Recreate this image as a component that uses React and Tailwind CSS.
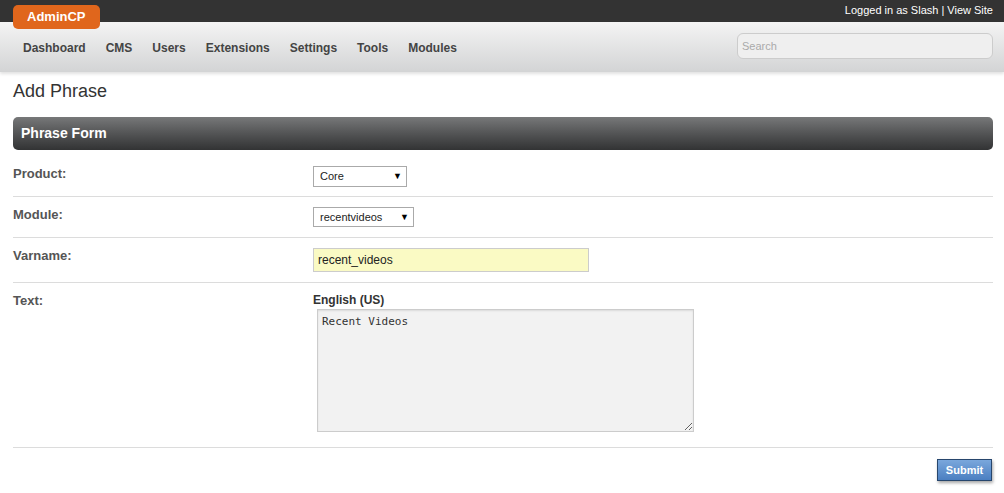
import { useState } from 'react';

const navItems = ['Dashboard', 'CMS', 'Users', 'Extensions', 'Settings', 'Tools', 'Modules'];

const Row = ({ label, children, className = '' }) => (
  <div className={`flex border-b border-[#dcdcdc] ${className}`}>
    <div className="w-[300px] text-[13px] font-bold text-[#555]">{label}</div>
    <div className="flex-1">{children}</div>
  </div>
);

export default function App() {
  const [product, setProduct] = useState('core');
  const [module, setModule] = useState('recentvideos');
  const [varname, setVarname] = useState('recent_videos');
  const [text, setText] = useState('Recent Videos');

  return (
    <div className="min-h-[493px] bg-white font-['Liberation_Sans',Arial,sans-serif] text-[#333]">
      {/* top strip */}
      <div className="flex h-[22px] items-start justify-between bg-[#333] pl-[13px] pr-[11px]">
        <div className="mt-[5px] rounded-[5px] bg-[#e0661c] px-[14px] pt-[3px] pb-[4px] text-[13px] font-bold leading-[17px] text-white">
          AdminCP
        </div>
        <div className="pt-[3px] text-[11px] leading-[14px] text-white">
          Logged in as Slash | View Site
        </div>
      </div>

      {/* nav */}
      <div className="flex h-[50px] items-center justify-between bg-gradient-to-b from-[#f4f4f4] to-[#d3d4d5] pl-[13px] pr-[11px] shadow-[0_2px_3px_rgba(0,0,0,0.12)]">
        <div className="flex gap-[20px] pl-[10px] pt-[1px]">
          {navItems.map(n => (
            <span key={n} className="text-[12px] font-bold text-[#444]">{n}</span>
          ))}
        </div>
        <input
          placeholder="Search"
          className="mt-[-2px] h-[26px] w-[256px] rounded-[6px] border border-[#ccc] bg-[#efefef] px-[4px] text-[11px] text-[#333] placeholder:text-[#aaa] outline-none"
        />
      </div>

      <div className="pl-[13px] pr-[11px]">
        <h1 className="mt-[8px] text-[18px] leading-[22px] text-[#333]">Add Phrase</h1>

        <div className="mt-[15px] flex h-[33px] items-center rounded-[5px] bg-gradient-to-b from-[#777879] to-[#323334] px-[8px] text-[14px] font-bold text-white">
          Phrase Form
        </div>

        <Row label="Product:" className="h-[47px] pt-[16px] leading-[15px]">
          <div className="relative inline-block">
            <select
              value={product}
              onChange={e => setProduct(e.target.value)}
              className="h-[21px] w-[94px] appearance-none border border-[#aaa] bg-white pl-[6px] text-[11px] text-[#222] outline-none"
            >
              <option value="core">Core</option>
            </select>
            <span className="pointer-events-none absolute right-[5px] top-[3px] text-[9px] text-black">▼</span>
          </div>
        </Row>

        <Row label="Module:" className="h-[41px] pt-[10px] leading-[15px]">
          <div className="relative inline-block">
            <select
              value={module}
              onChange={e => setModule(e.target.value)}
              className="h-[20px] w-[101px] appearance-none border border-[#aaa] bg-white pl-[6px] text-[11px] text-[#222] outline-none"
            >
              <option value="recentvideos">recentvideos</option>
            </select>
            <span className="pointer-events-none absolute right-[5px] top-[3px] text-[9px] text-black">▼</span>
          </div>
        </Row>

        <Row label="Varname:" className="h-[45px] pt-[10px] leading-[15px]">
          <input
            value={varname}
            onChange={e => setVarname(e.target.value)}
            className="h-[24px] w-[276px] border border-[#ccc] bg-[#fafac4] px-[4px] text-[12px] text-[#222] outline-none"
          />
        </Row>

        <Row label="Text:" className="h-[165px] pt-[10px] leading-[15px]">
          <div className="text-[12px] font-bold text-[#333]">English (US)</div>
          <textarea
            value={text}
            onChange={e => setText(e.target.value)}
            className="ml-[4px] mt-[1px] block h-[123px] w-[377px] border border-[#ccc] bg-[#f2f2f2] px-[4px] py-[4px] font-['DejaVu_Sans_Mono',monospace] text-[11px] text-[#333] shadow-[inset_0_1px_2px_rgba(0,0,0,0.1)] outline-none"
          />
        </Row>

        <div className="flex justify-end pt-[11px] pr-[1px]">
          <button className="h-[22px] w-[55px] border border-[#27466d] bg-gradient-to-b from-[#7aa7dc] to-[#4b7fc1] text-[11px] font-bold text-white shadow-[1px_2px_3px_rgba(0,0,0,0.35)]">
            Submit
          </button>
        </div>
      </div>
    </div>
  );
}
